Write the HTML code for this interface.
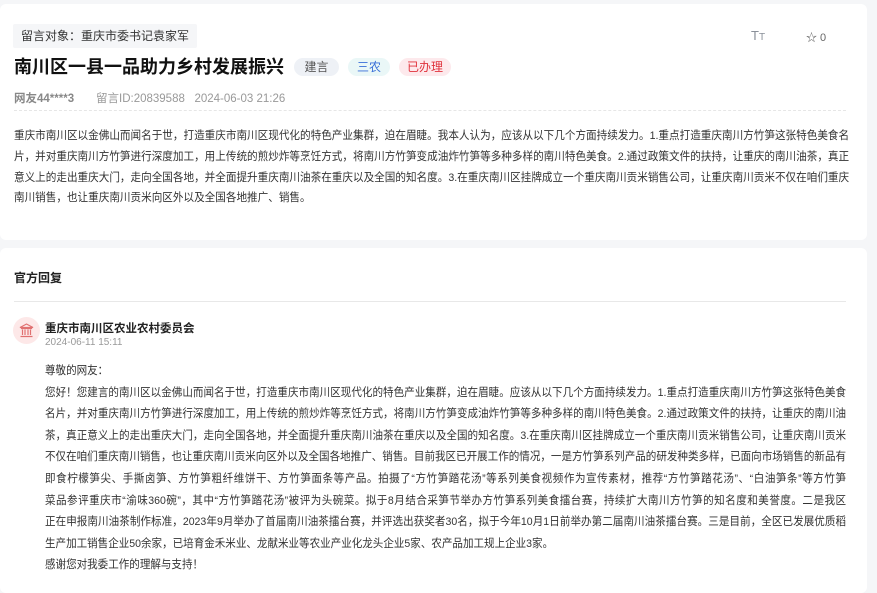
<!DOCTYPE html>
<html><head><meta charset="utf-8"><style>
*{margin:0;padding:0;box-sizing:border-box}
body{width:877px;height:586px;overflow:hidden;background:#f5f6f8;font-family:"Liberation Sans","Noto Sans CJK SC",sans-serif;color:#333;position:relative}
.card{position:absolute;left:0;width:867px;background:#fff;border-radius:6px;overflow:hidden}
.abs{position:absolute;white-space:nowrap}
.tag{position:absolute;height:18px;line-height:18px;font-size:12px;border-radius:9px;text-align:center}
.p{position:absolute;font-size:11.4px;color:#333}
.p div{white-space:nowrap;text-align:justify;text-align-last:justify;transform-origin:0 0}
.p div.l{text-align-last:left}
.a div{width:895px;transform:scaleX(0.93)}
.b div{width:866px;transform:scaleX(0.925)}
</style></head><body>
<div class="card" style="top:4px;height:236px">
  <div class="abs" style="left:13px;top:20px;height:24px;padding:0 8px;line-height:24px;background:#f5f6f8;font-size:12px;color:#333;border-radius:2px">留言对象：重庆市委书记袁家军</div>
  <div class="abs" style="left:14px;top:50px;font-size:18px;font-weight:bold;color:#111;line-height:26px">南川区一县一品助力乡村发展振兴</div>
  <div class="tag" style="left:294px;top:54px;width:45px;background:#eef1f6;color:#555">建言</div>
  <div class="tag" style="left:348px;top:54px;width:42px;background:#eaf7f7;color:#3a6fd8">三农</div>
  <div class="tag" style="left:399px;top:54px;width:52px;background:#fde9ec;color:#e0323c">已办理</div>
  <div class="abs" style="left:14px;top:86px;font-size:11.5px;color:#888;font-weight:bold">网友44****3</div>
  <div class="abs" style="left:96px;top:86px;font-size:11.5px;color:#999">留言ID:20839588&nbsp;&nbsp;&nbsp;2024-06-03 21:26</div>
  <div class="abs" style="left:751px;top:24px;font-size:13px;color:#8a9099">T<span style="font-size:10px">T</span></div>
  <div class="abs" style="left:806px;top:25px;font-size:11px;color:#666">☆ 0</div>
  <div style="position:absolute;left:14px;top:106px;width:832px;border-top:1px dashed #e6e6e6"></div>
  <div class="p a" style="left:14px;top:122px;line-height:20.8px">
<div>重庆市南川区以金佛山而闻名于世，打造重庆市南川区现代化的特色产业集群，迫在眉睫。我本人认为，应该从以下几个方面持续发力。1.重点打造重庆南川方竹笋这张特色美食名</div>
<div>片，并对重庆南川方竹笋进行深度加工，用上传统的煎炒炸等烹饪方式，将南川方竹笋变成油炸竹笋等多种多样的南川特色美食。2.通过政策文件的扶持，让重庆的南川油茶，真正</div>
<div>意义上的走出重庆大门，走向全国各地，并全面提升重庆南川油茶在重庆以及全国的知名度。3.在重庆南川区挂牌成立一个重庆南川贡米销售公司，让重庆南川贡米不仅在咱们重庆</div>
<div class="l">南川销售，也让重庆南川贡米向区外以及全国各地推广、销售。</div>
  </div>
</div>
<div class="card" style="top:248px;height:345px">
  <div class="abs" style="left:14px;top:21px;font-size:12px;font-weight:bold;color:#222">官方回复</div>
  <div style="position:absolute;left:14px;top:53px;width:832px;border-top:1px solid #e8e8e8"></div>
  <div style="position:absolute;left:13px;top:69px;width:27px;height:27px;border-radius:50%;background:#fde8e8"></div>
  <svg style="position:absolute;left:18px;top:74px" width="17" height="17" viewBox="0 0 17 17" fill="none" stroke="#e07070" stroke-width="1.2"><path d="M2 5.5L8.5 2L15 5.5Z"/><path d="M3 6.5H14M4.5 7.5V13M7 7.5V13M10 7.5V13M12.5 7.5V13M2.5 14.5H14.5"/></svg>
  <div class="abs" style="left:45px;top:72px;font-size:11.5px;font-weight:bold;color:#222">重庆市南川区农业农村委员会</div>
  <div class="abs" style="left:45px;top:89px;font-size:10px;color:#999">2024-06-11 15:11</div>
  <div class="p b" style="left:45px;top:113px;line-height:21.6px">
<div class="l">尊敬的网友：</div>
<div>您好！您建言的南川区以金佛山而闻名于世，打造重庆市南川区现代化的特色产业集群，迫在眉睫。应该从以下几个方面持续发力。1.重点打造重庆南川方竹笋这张特色美食</div>
<div>名片，并对重庆南川方竹笋进行深度加工，用上传统的煎炒炸等烹饪方式，将南川方竹笋变成油炸竹笋等多种多样的南川特色美食。2.通过政策文件的扶持，让重庆的南川油</div>
<div>茶，真正意义上的走出重庆大门，走向全国各地，并全面提升重庆南川油茶在重庆以及全国的知名度。3.在重庆南川区挂牌成立一个重庆南川贡米销售公司，让重庆南川贡米</div>
<div>不仅在咱们重庆南川销售，也让重庆南川贡米向区外以及全国各地推广、销售。目前我区已开展工作的情况，一是方竹笋系列产品的研发种类多样，已面向市场销售的新品有</div>
<div>即食柠檬笋尖、手撕卤笋、方竹笋粗纤维饼干、方竹笋面条等产品。拍摄了“方竹笋踏花汤”等系列美食视频作为宣传素材，推荐“方竹笋踏花汤”、“白油笋条”等方竹笋</div>
<div>菜品参评重庆市“渝味360碗”，其中“方竹笋踏花汤”被评为头碗菜。拟于8月结合采笋节举办方竹笋系列美食擂台赛，持续扩大南川方竹笋的知名度和美誉度。二是我区</div>
<div>正在申报南川油茶制作标准，2023年9月举办了首届南川油茶擂台赛，并评选出获奖者30名，拟于今年10月1日前举办第二届南川油茶擂台赛。三是目前，全区已发展优质稻</div>
<div class="l">生产加工销售企业50余家，已培育金禾米业、龙献米业等农业产业化龙头企业5家、农产品加工规上企业3家。</div>
<div class="l">感谢您对我委工作的理解与支持！</div>
  </div>
</div>
</body></html>
